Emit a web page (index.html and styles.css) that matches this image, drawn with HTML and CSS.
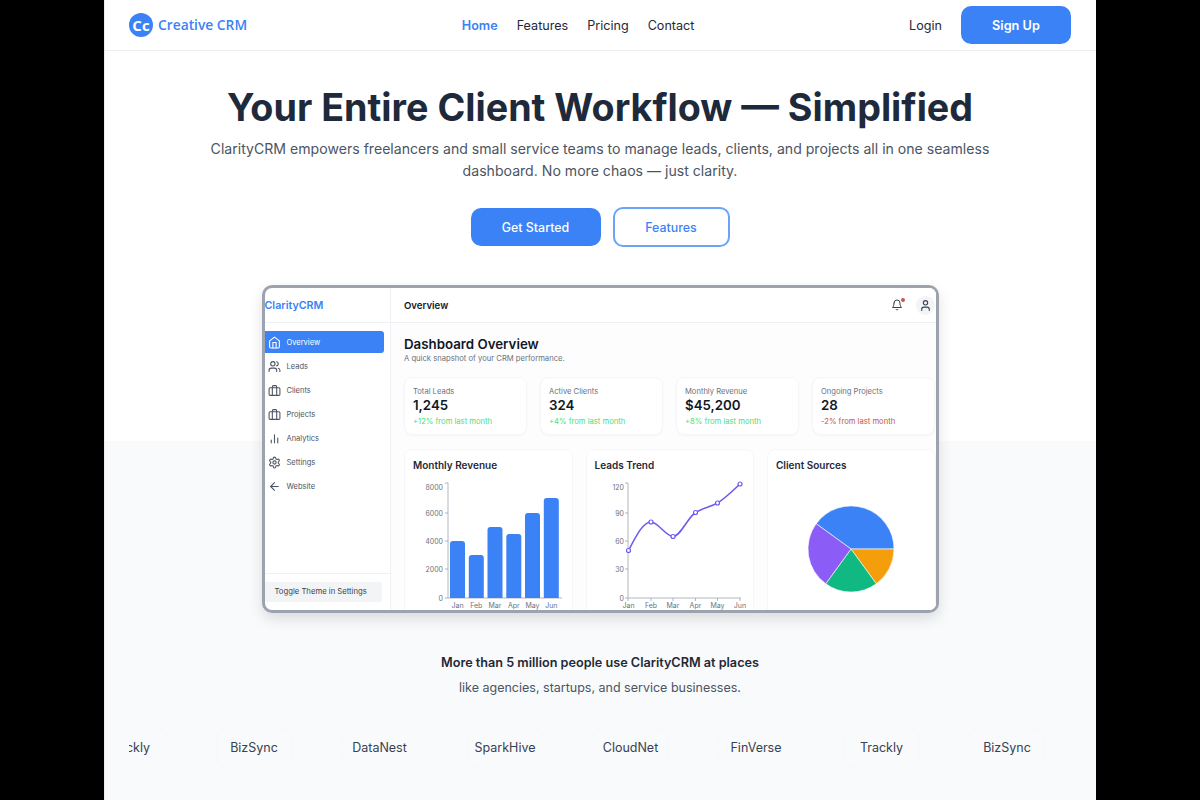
FILE: index.html
```html
<!DOCTYPE html>
<html lang="en">
<head>
    <meta charset="UTF-8">
    <meta name="viewport" content="width=device-width, initial-scale=1.0">
    <title>Creative CRM</title>
    <link rel="stylesheet" href="styles.css">
</head>
<body>
    <div class="page">
        <nav class="navbar">
            <div class="brand">
                <span class="brand-mark">Cc</span>
                <span class="brand-name">Creative CRM</span>
            </div>
            <div class="nav-links">
                <a class="nav-link active">Home</a>
                <a class="nav-link">Features</a>
                <a class="nav-link">Pricing</a>
                <a class="nav-link">Contact</a>
            </div>
            <div class="nav-actions">
                <a class="nav-link">Login</a>
                <button class="btn-signup">Sign Up</button>
            </div>
        </nav>

        <section class="hero">
            <h1>Your Entire Client Workflow — Simplified</h1>
            <p class="hero-text">ClarityCRM empowers freelancers and small service teams to manage leads, clients, and projects all in one seamless dashboard. No more chaos — just clarity.</p>
            <div class="hero-buttons">
                <button class="btn-primary">Get Started</button>
                <button class="btn-outline">Features</button>
            </div>
        </section>

        <div class="dashboard">
            <aside class="sidebar">
                <div class="side-logo">ClarityCRM</div>
                <div class="side-menu">
                    <div class="side-item current">
                        <svg class="icon" viewBox="0 0 24 24"><path d="m3 9 9-7 9 7v11a2 2 0 0 1-2 2H5a2 2 0 0 1-2-2z"/><polyline points="9 22 9 12 15 12 15 22"/></svg>
                        Overview
                    </div>
                    <div class="side-item">
                        <svg class="icon" viewBox="0 0 24 24"><path d="M16 21v-2a4 4 0 0 0-4-4H6a4 4 0 0 0-4 4v2"/><circle cx="9" cy="7" r="4"/><path d="M22 21v-2a4 4 0 0 0-3-3.87"/><path d="M16 3.13a4 4 0 0 1 0 7.75"/></svg>
                        Leads
                    </div>
                    <div class="side-item">
                        <svg class="icon" viewBox="0 0 24 24"><rect width="20" height="14" x="2" y="7" rx="2"/><path d="M16 21V5a2 2 0 0 0-2-2h-4a2 2 0 0 0-2 2v16"/></svg>
                        Clients
                    </div>
                    <div class="side-item">
                        <svg class="icon" viewBox="0 0 24 24"><rect width="20" height="14" x="2" y="7" rx="2"/><path d="M16 21V5a2 2 0 0 0-2-2h-4a2 2 0 0 0-2 2v16"/></svg>
                        Projects
                    </div>
                    <div class="side-item">
                        <svg class="icon" viewBox="0 0 24 24"><line x1="6" y1="20" x2="6" y2="15"/><line x1="12" y1="20" x2="12" y2="5"/><line x1="18" y1="20" x2="18" y2="11"/></svg>
                        Analytics
                    </div>
                    <div class="side-item">
                        <svg class="icon" viewBox="0 0 24 24"><path d="M12.22 2h-.44a2 2 0 0 0-2 2v.18a2 2 0 0 1-1 1.73l-.43.25a2 2 0 0 1-2 0l-.15-.08a2 2 0 0 0-2.73.73l-.22.38a2 2 0 0 0 .73 2.73l.15.1a2 2 0 0 1 1 1.72v.51a2 2 0 0 1-1 1.74l-.15.09a2 2 0 0 0-.73 2.73l.22.38a2 2 0 0 0 2.73.73l.15-.08a2 2 0 0 1 2 0l.43.25a2 2 0 0 1 1 1.73V20a2 2 0 0 0 2 2h.44a2 2 0 0 0 2-2v-.18a2 2 0 0 1 1-1.73l.43-.25a2 2 0 0 1 2 0l.15.08a2 2 0 0 0 2.73-.73l.22-.39a2 2 0 0 0-.73-2.73l-.15-.08a2 2 0 0 1-1-1.74v-.5a2 2 0 0 1 1-1.74l.15-.09a2 2 0 0 0 .73-2.73l-.22-.38a2 2 0 0 0-2.73-.73l-.15.08a2 2 0 0 1-2 0l-.43-.25a2 2 0 0 1-1-1.73V4a2 2 0 0 0-2-2z"/><circle cx="12" cy="12" r="3"/></svg>
                        Settings
                    </div>
                    <div class="side-item">
                        <svg class="icon" viewBox="0 0 24 24"><path d="m12 19-7-7 7-7"/><path d="M19 12H5"/></svg>
                        Website
                    </div>
                </div>
                <div class="side-footer">
                    <div class="theme-toggle">Toggle Theme in Settings</div>
                </div>
            </aside>

            <div class="main">
                <header class="topbar">
                    <span class="topbar-title">Overview</span>
                    <div class="topbar-icons">
                        <span class="bell">
                            <svg class="icon" viewBox="0 0 24 24"><path d="M6 8a6 6 0 0 1 12 0c0 7 3 9 3 9H3s3-2 3-9"/><path d="M10.3 21a1.94 1.94 0 0 0 3.4 0"/></svg>
                            <span class="bell-dot"></span>
                        </span>
                        <span class="avatar">
                            <svg class="icon" viewBox="0 0 24 24"><path d="M19 21v-2a4 4 0 0 0-4-4H9a4 4 0 0 0-4 4v2"/><circle cx="12" cy="7" r="4"/></svg>
                        </span>
                    </div>
                </header>

                <div class="content">
                    <h2>Dashboard Overview</h2>
                    <p class="subtitle">A quick snapshot of your CRM performance.</p>

                    <div class="stats">
                        <div class="stat-card">
                            <div class="stat-label">Total Leads</div>
                            <div class="stat-value">1,245</div>
                            <div class="stat-change up">+12% from last month</div>
                        </div>
                        <div class="stat-card">
                            <div class="stat-label">Active Clients</div>
                            <div class="stat-value">324</div>
                            <div class="stat-change up">+4% from last month</div>
                        </div>
                        <div class="stat-card">
                            <div class="stat-label">Monthly Revenue</div>
                            <div class="stat-value">$45,200</div>
                            <div class="stat-change up">+8% from last month</div>
                        </div>
                        <div class="stat-card">
                            <div class="stat-label">Ongoing Projects</div>
                            <div class="stat-value">28</div>
                            <div class="stat-change down">-2% from last month</div>
                        </div>
                    </div>

                    <div class="charts">
                        <div class="chart-card">
                            <div class="chart-title">Monthly Revenue</div>
                            <svg class="chart" viewBox="0 0 147 140">
                                <path class="axis" d="M30 7h3v115h114M30 37h3M30 65h3M30 93h3M30 122h3"/>
                                <g class="tick tick-end">
                                    <text x="28" y="14">8000</text>
                                    <text x="28" y="40">6000</text>
                                    <text x="28" y="68">4000</text>
                                    <text x="28" y="96">2000</text>
                                    <text x="28" y="125">0</text>
                                </g>
                                <g class="bars">
                                    <path d="M35 122V68a3 3 0 0 1 3-3h9a3 3 0 0 1 3 3v54z"/>
                                    <path d="M53.8 122V82a3 3 0 0 1 3-3h9a3 3 0 0 1 3 3v40z"/>
                                    <path d="M72.5 122V54a3 3 0 0 1 3-3h9a3 3 0 0 1 3 3v68z"/>
                                    <path d="M91.3 122V61a3 3 0 0 1 3-3h9a3 3 0 0 1 3 3v61z"/>
                                    <path d="M110 122V40a3 3 0 0 1 3-3h9a3 3 0 0 1 3 3v82z"/>
                                    <path d="M128.8 122V25a3 3 0 0 1 3-3h9a3 3 0 0 1 3 3v97z"/>
                                </g>
                                <g class="tick tick-mid">
                                    <text x="42.5" y="132">Jan</text>
                                    <text x="61.3" y="132">Feb</text>
                                    <text x="80" y="132">Mar</text>
                                    <text x="98.8" y="132">Apr</text>
                                    <text x="117.5" y="132">May</text>
                                    <text x="136.3" y="132">Jun</text>
                                </g>
                            </svg>
                        </div>
                        <div class="chart-card">
                            <div class="chart-title">Leads Trend</div>
                            <svg class="chart" viewBox="0 0 147 140">
                                <path class="axis" d="M29 7h3v115h113M29 37h3M29 65h3M29 93h3M29 122h3M32 122v3M55 122v3M77 122v3M99.5 122v3M121.5 122v3M144 122v3"/>
                                <g class="tick tick-end">
                                    <text x="28" y="14">120</text>
                                    <text x="28" y="40">90</text>
                                    <text x="28" y="68">60</text>
                                    <text x="28" y="96">30</text>
                                    <text x="28" y="125">0</text>
                                </g>
                                <path class="trend" d="M32.5 74.5C40 60 47 46 55 46C62 46 70 60.5 77 60.5C84.5 60.5 92 41 99.5 36.5C107 32 114 31 121.5 27C129 22.5 136.5 15 144 8"/>
                                <g class="dots">
                                    <circle cx="32.5" cy="74.5" r="2"/>
                                    <circle cx="55" cy="46" r="2"/>
                                    <circle cx="77" cy="60.5" r="2"/>
                                    <circle cx="99.5" cy="36.5" r="2"/>
                                    <circle cx="121.5" cy="27" r="2"/>
                                    <circle cx="144" cy="8" r="2"/>
                                </g>
                                <g class="tick tick-mid">
                                    <text x="32.5" y="132">Jan</text>
                                    <text x="55" y="132">Feb</text>
                                    <text x="77" y="132">Mar</text>
                                    <text x="99.5" y="132">Apr</text>
                                    <text x="121.5" y="132">May</text>
                                    <text x="144" y="132">Jun</text>
                                </g>
                            </svg>
                        </div>
                        <div class="chart-card">
                            <div class="chart-title">Client Sources</div>
                            <svg class="chart" viewBox="0 0 147 140">
                                <g class="pie">
                                    <path fill="#3b82f6" d="M73 73L38.2 47.7A43 43 0 0 1 116 73Z"/>
                                    <path fill="#f59e0b" d="M73 73L116 73A43 43 0 0 1 98.3 107.8Z"/>
                                    <path fill="#10b981" d="M73 73L98.3 107.8A43 43 0 0 1 47.7 107.8Z"/>
                                    <path fill="#8b5cf6" d="M73 73L47.7 107.8A43 43 0 0 1 38.2 47.7Z"/>
                                </g>
                            </svg>
                        </div>
                    </div>
                </div>
            </div>
        </div>

        <section class="social">
            <p class="social-title">More than 5 million people use ClarityCRM at places</p>
            <p class="social-sub">like agencies, startups, and service businesses.</p>
            <div class="logo-strip">
                <div class="logo-track">
                    <div class="logo-item">Trackly</div>
                    <div class="logo-item">BizSync</div>
                    <div class="logo-item">DataNest</div>
                    <div class="logo-item">SparkHive</div>
                    <div class="logo-item">CloudNet</div>
                    <div class="logo-item">FinVerse</div>
                    <div class="logo-item">Trackly</div>
                    <div class="logo-item">BizSync</div>
                </div>
            </div>
        </section>
    </div>
</body>
</html>
```

FILE: styles.css
```css
* {
    box-sizing: border-box;
}

body {
    margin: 0;
    background: #000000;
    font-family: 'Inter', sans-serif;
    color: #1f2937;
}

.page {
    position: relative;
    width: 992px;
    height: 800px;
    margin: 0 auto;
    background: #ffffff;
    overflow: hidden;
}

/* thin grey edge down the left side */
.page::before {
    content: "";
    position: absolute;
    top: 0;
    bottom: 0;
    left: 0;
    z-index: 2;
    width: 1px;
    background: #ececee;
}

/* Navbar */
.navbar {
    display: flex;
    align-items: center;
    justify-content: space-between;
    height: 51px;
    padding: 0 25px;
    border-bottom: 1px solid #eceef1;
}

.brand {
    display: flex;
    align-items: center;
    gap: 5px;
}

.brand-mark {
    display: flex;
    align-items: center;
    justify-content: center;
    width: 24px;
    height: 24px;
    border-radius: 50%;
    background: #3b82f6;
    color: white;
    font-family: 'Open Sans', sans-serif;
    font-size: 15px;
    font-weight: 700;
}

.brand-name {
    padding-bottom: 1px;
    font-family: 'Open Sans', sans-serif;
    font-size: 13.8px;
    font-weight: 600;
    color: #3b82f6;
}

.nav-links {
    display: flex;
    gap: 19px;
}

.nav-link {
    font-size: 12.6px;
    color: #1f2937;
}

.nav-link.active {
    color: #3b82f6;
    font-weight: 600;
}

.nav-actions {
    display: flex;
    align-items: center;
    gap: 19px;
}

.btn-signup {
    width: 110px;
    height: 38px;
    background: #3b82f6;
    color: white;
    border: none;
    border-radius: 10px;
    font-family: inherit;
    font-size: 12.7px;
    font-weight: 600;
}

/* Hero */
.hero {
    padding-top: 32px;
    text-align: center;
}

.hero h1 {
    margin: 0;
    font-size: 37.7px;
    line-height: 48px;
    font-weight: 700;
    color: #1e293b;
}

.hero-text {
    width: 800px;
    margin: 7px auto 0;
    font-size: 14.1px;
    line-height: 22px;
    color: #4b5563;
}

.hero-buttons {
    display: flex;
    justify-content: center;
    align-items: center;
    gap: 12px;
    margin-top: 25px;
}

.btn-primary {
    width: 130px;
    height: 38px;
    background: #3b82f6;
    color: white;
    border: none;
    border-radius: 10px;
    font-family: inherit;
    font-size: 12.4px;
    font-weight: 500;
}

.btn-outline {
    width: 117px;
    height: 40px;
    background: white;
    color: #3b82f6;
    border: 2px solid #6ba3f8;
    border-radius: 10px;
    font-family: inherit;
    font-size: 12.4px;
    font-weight: 500;
}

/* Dashboard preview */
.dashboard {
    position: relative;
    z-index: 1;
    display: flex;
    width: 677px;
    height: 328px;
    margin: 38px auto 0;
    background: #ffffff;
    border: 3px solid #9ca3af;
    border-radius: 10px;
    box-shadow: 0 6px 14px rgba(0, 0, 0, 0.12);
    overflow: hidden;
}

.sidebar {
    display: flex;
    flex-direction: column;
    flex: 0 0 126px;
    border-right: 1px solid #eef0f3;
}

.side-logo {
    height: 34px;
    font-size: 10.7px;
    line-height: 36px;
    font-weight: 600;
    color: #3b82f6;
}

.side-menu {
    flex: 1;
    padding: 8px 6px 0 0;
    border-top: 1px solid #eef0f3;
}

.side-item {
    display: flex;
    align-items: center;
    gap: 5.5px;
    height: 22px;
    margin-bottom: 2px;
    padding-left: 3.5px;
    border-radius: 0 3px 3px 0;
    font-size: 7.5px;
    color: #4b5563;
}

.side-item.current {
    background: #3b82f6;
    color: white;
}

.side-item .icon {
    width: 13px;
    height: 13px;
}

.icon {
    fill: none;
    stroke: currentColor;
    stroke-width: 2;
    stroke-linecap: round;
    stroke-linejoin: round;
}

.side-footer {
    height: 37px;
    padding: 8px 8px 0 0;
    border-top: 1px solid #eef0f3;
}

.theme-toggle {
    height: 20px;
    padding-left: 10px;
    border-radius: 0 3px 3px 0;
    background: #f3f4f6;
    font-size: 7.7px;
    line-height: 20px;
    color: #374151;
}

.main {
    flex: 1;
    min-width: 0;
    background: #fdfdfe;
}

.topbar {
    display: flex;
    align-items: center;
    justify-content: space-between;
    height: 35px;
    padding: 0 1px 0 13.5px;
    background: white;
    border-bottom: 1px solid #eef0f3;
}

.topbar-title {
    font-size: 9.6px;
    font-weight: 600;
    color: #111827;
}

.topbar-icons {
    display: flex;
    align-items: center;
    gap: 13px;
    color: #374151;
}

.topbar-icons .icon {
    display: block;
    width: 12px;
    height: 12px;
}

.avatar .icon {
    width: 13px;
    height: 13px;
}

.bell {
    position: relative;
}

.bell-dot {
    position: absolute;
    top: -1px;
    right: -2px;
    width: 4px;
    height: 4px;
    border-radius: 50%;
    background: #c2574a;
}

.avatar {
    display: flex;
    align-items: center;
    justify-content: center;
    width: 19px;
    height: 19px;
    border-radius: 50%;
    background: #f3f4f6;
}

.content {
    padding: 13px 0 0 13.5px;
}

.content h2 {
    margin: 0;
    font-size: 13.3px;
    line-height: 16px;
    font-weight: 600;
    color: #111827;
}

.subtitle {
    margin: 2px 0 0;
    font-size: 7.65px;
    line-height: 10px;
    color: #6b7280;
}

.stats {
    display: flex;
    gap: 13px;
    margin-top: 13px;
}

.stat-card {
    width: 123px;
    height: 58px;
    padding: 9px 8px;
    background: white;
    border: 1px solid #f5f6f8;
    border-radius: 8px;
    box-shadow: 0 1px 2px rgba(0, 0, 0, 0.03);
}

.stat-label {
    font-size: 7.6px;
    line-height: 10px;
    color: #6b7280;
}

.stat-value {
    font-size: 13.3px;
    line-height: 16px;
    font-weight: 600;
    color: #111827;
}

.stat-change {
    margin-top: 4px;
    font-size: 7.65px;
    line-height: 10px;
}

.up {
    color: #4ade80;
}

.down {
    color: #c2574a;
}

.charts {
    display: flex;
    gap: 13px;
    margin-top: 14px;
}

.chart-card {
    flex: 0 0 168.5px;
    height: 190px;
    padding: 9px 8px;
    background: white;
    border: 1px solid #f5f6f8;
    border-radius: 8px;
}

.chart-title {
    font-size: 10px;
    line-height: 12px;
    font-weight: 600;
    color: #1f2937;
}

.chart {
    display: block;
    width: 147px;
    height: 140px;
    margin: 5px 0 0 1.5px;
    overflow: visible;
}

.axis {
    fill: none;
    stroke: #9ca3af;
    stroke-width: 0.8;
}

.tick text {
    font-size: 7px;
    fill: #6b7280;
}

.tick-end text {
    text-anchor: end;
}

.tick-mid text {
    text-anchor: middle;
}

.bars path {
    fill: #3b82f6;
}

.trend {
    fill: none;
    stroke: #6d5cf0;
    stroke-width: 1.6;
}

.dots circle {
    fill: white;
    stroke: #6d5cf0;
    stroke-width: 1.2;
}

.pie path {
    stroke: white;
    stroke-width: 0.6;
}

/* Social proof */
.social {
    margin-top: -172px;
    height: 400px;
    padding-top: 213px;
    background: #f9fafb;
    text-align: center;
}

.social-title {
    margin: 0;
    font-size: 12.65px;
    line-height: 18px;
    font-weight: 600;
    color: #1f2937;
}

.social-sub {
    margin: 7px 0 0;
    font-size: 12.5px;
    line-height: 18px;
    color: #4b5563;
}

.logo-strip {
    margin: 32px 25px 0;
    overflow: hidden;
}

.logo-track {
    display: flex;
    gap: 49.5px;
    margin-left: -38.5px;
}

.logo-item {
    flex: 0 0 76px;
    height: 38px;
    border: 1px solid #f7f8fa;
    border-radius: 8px;
    font-size: 12.5px;
    line-height: 36px;
    white-space: nowrap;
    color: #374151;
}
```
